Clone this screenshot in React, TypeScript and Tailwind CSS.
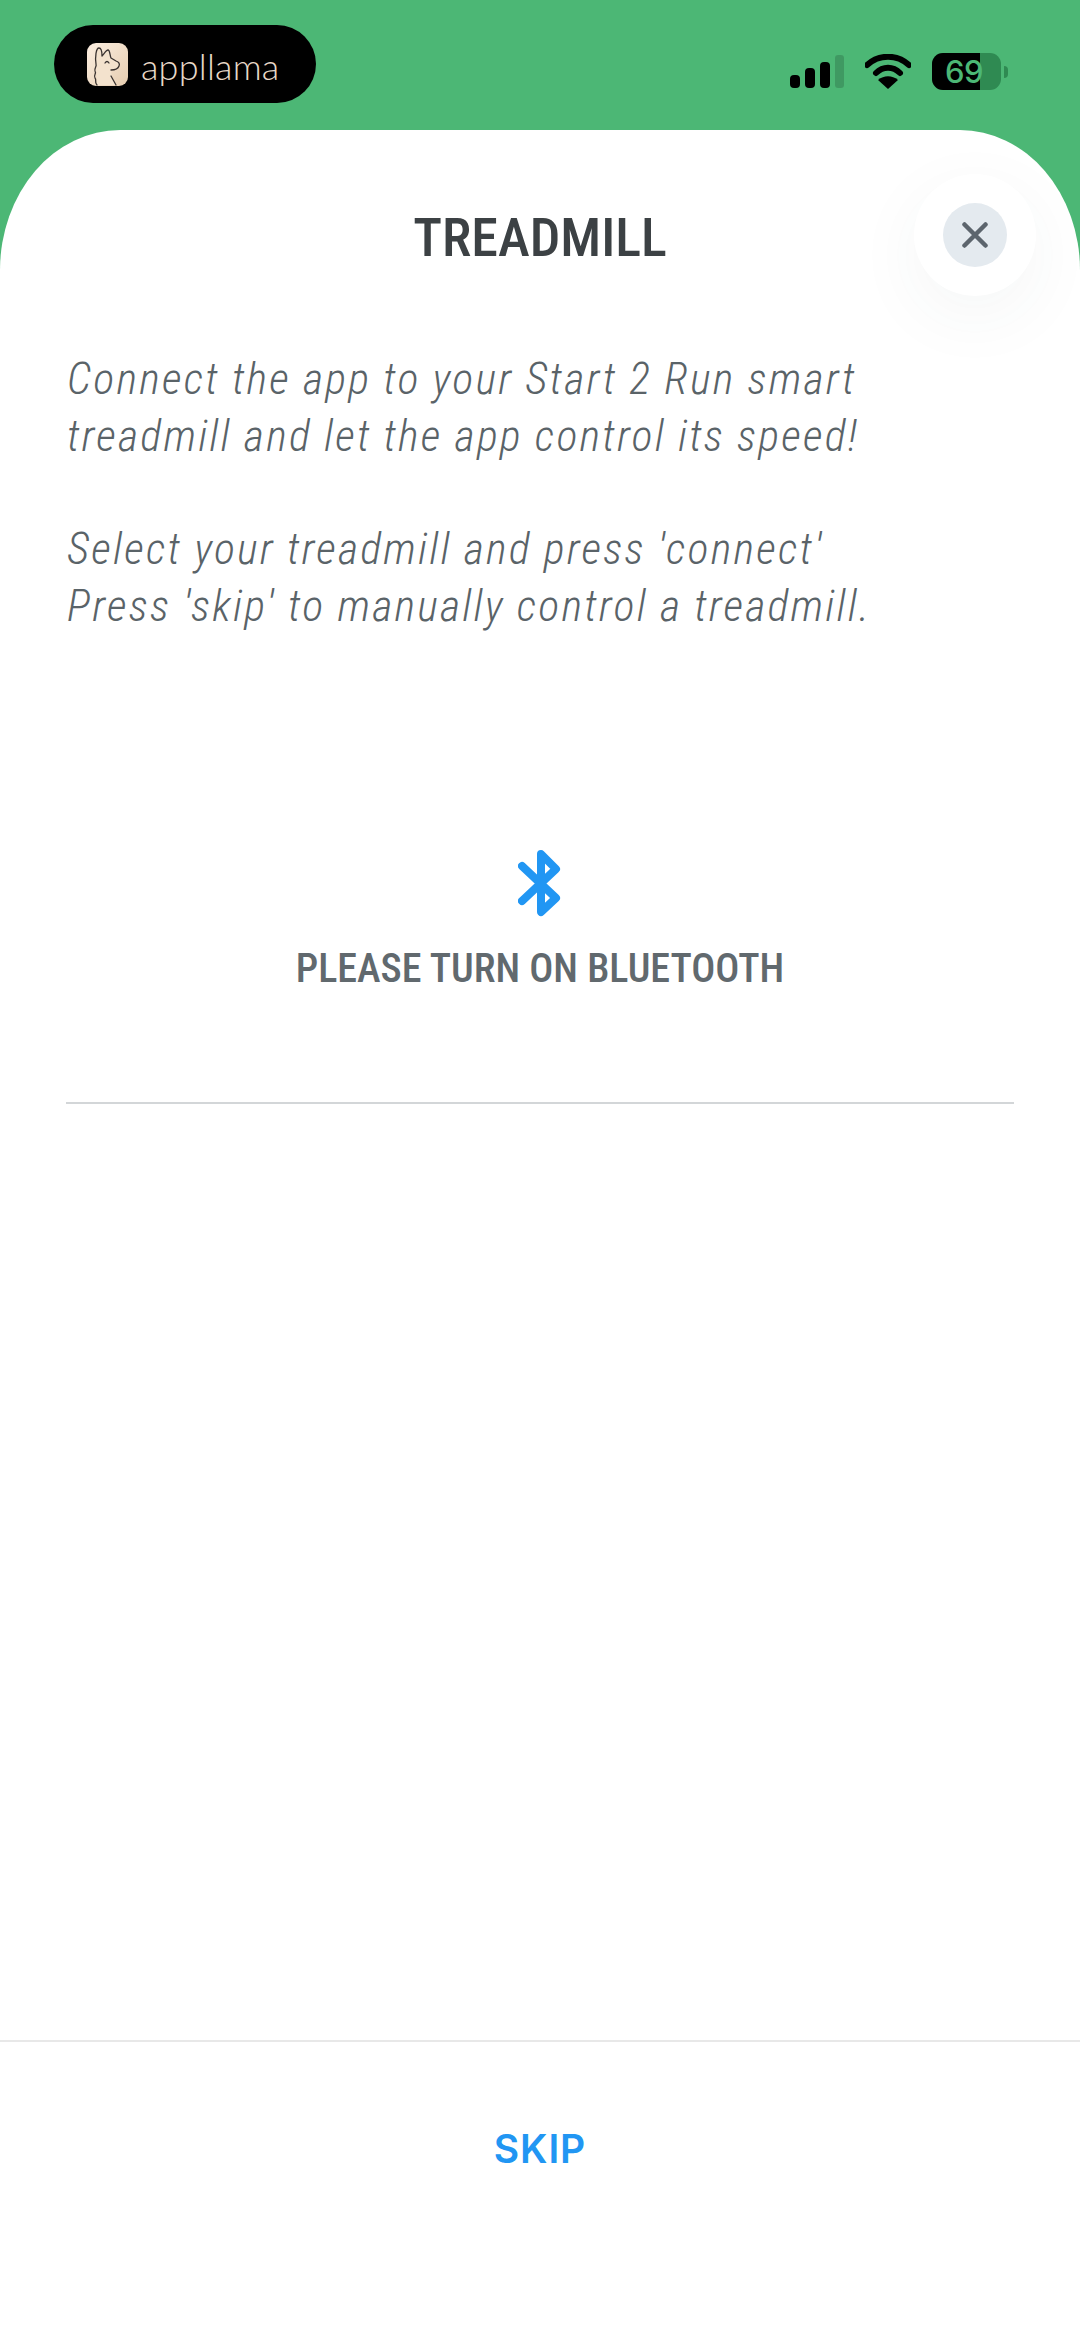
import React from "react";

const barlow = "font-['Roboto',sans-serif]";

function LlamaIcon() {
  return (
    <svg width="41" height="43" viewBox="0 0 41 43" className="shrink-0">
      <defs>
        <linearGradient id="llamaBg" x1="0" y1="0" x2="1" y2="1">
          <stop offset="0" stopColor="#fbeee0" />
          <stop offset="1" stopColor="#e6cdb0" />
        </linearGradient>
      </defs>
      <rect x="0" y="0" width="41" height="43" rx="9" fill="url(#llamaBg)" />
      <path
        d="M10 42 L10 17 C9 10 10 5 12 5 C15 5 15 10 15 13 C17 11 19 7 21 7 C23 7 23 13 24 15 L29 18 C32 19 33 21 32 23 C31 26 27 27 24 27 L25 34 L29 42 Z"
        fill="#f3e2cd"
      />
      <path
        d="M10 42 C7 39 10 37 8 35 C6 32 10 31 8 28 C7 25 10 24 9 21 C8 14 9 5 12 5 C15 5 15 10 15 13 C17 11 19 7 21 7 C23 7 23 13 24 15 L29 18 C32 19 33 21 32 23 C31 26 27 27 24 27 M24 33 L29 42"
        fill="none"
        stroke="#3a3330"
        strokeWidth="1.3"
        strokeLinecap="round"
        strokeLinejoin="round"
      />
      <path d="M18 20 Q20 17 22 20" fill="none" stroke="#3a3330" strokeWidth="1.3" strokeLinecap="round" />
    </svg>
  );
}

function StatusIcons() {
  return (
    <div className="flex items-center">
      <svg width="54" height="34" viewBox="0 0 54 34" className="block">
        <rect x="0" y="20" width="10" height="13" rx="4" fill="#000" />
        <rect x="15" y="13" width="10" height="20" rx="4" fill="#000" />
        <rect x="30" y="7" width="10" height="26" rx="4" fill="#000" />
        <rect x="45" y="0" width="9" height="33" rx="3" fill="#000" fillOpacity="0.16" />
      </svg>
      <svg width="46" height="36" viewBox="0 0 46 36" className="ml-[21px] block">
        <path d="M2 11 C14 0 32 0 44 11" fill="none" stroke="#000" strokeWidth="6" strokeLinecap="round" />
        <path d="M11 19 C18 12 28 12 35 19" fill="none" stroke="#000" strokeWidth="6" strokeLinecap="round" />
        <path d="M13 26 C19 21 27 21 33 26 L23 35 Z" fill="#000" />
      </svg>
      <div className="ml-[21px] flex items-center">
        <div className="relative flex h-[37px] w-[69px] items-center overflow-hidden rounded-[11px] bg-[#2f8a52]">
          <div className="absolute inset-y-0 left-0 w-[48px] bg-black" />
          <span className="relative ml-[13px] font-['Inter',sans-serif] text-[31px] leading-none font-medium tracking-[-0.5px] text-[#4cb775]">
            69
          </span>
        </div>
        <div className="ml-[3px] h-[12px] w-[4px] rounded-r-full bg-[#2f8a52]" />
      </div>
    </div>
  );
}

export default function App() {
  return (
    <div className="flex h-[2337px] w-[1080px] flex-col overflow-hidden bg-[#4cb775]">
      <div className="flex h-[130px] shrink-0 items-start justify-between pt-[25px] pr-[72px] pl-[54px]">
        <div className="flex h-[78px] w-[262px] items-center rounded-full bg-black pl-[33px]">
          <LlamaIcon />
          <span className="mt-[3px] ml-[13px] font-['Lato',sans-serif] text-[36px] leading-none font-light tracking-[0.2px] text-[#e8d9c8]">
            appllama
          </span>
        </div>
        <div className="pt-[28px] pl-[2px]">
          <StatusIcons />
        </div>
      </div>

      <div className="relative flex flex-1 flex-col rounded-t-[120px_140px] bg-white">
        <div className="absolute top-[44px] right-[44px] flex h-[122px] w-[122px] items-center justify-center rounded-full bg-white shadow-[0_20px_70px_rgba(60,70,80,0.05)]">
          <div className="flex h-[64px] w-[64px] items-center justify-center rounded-full bg-[#e4eaef]">
            <svg width="26" height="26" viewBox="0 0 26 26">
              <path d="M2.5 2.5 L23.5 23.5 M23.5 2.5 L2.5 23.5" stroke="#5c656d" strokeWidth="4.5" strokeLinecap="round" />
            </svg>
          </div>
        </div>

        <h1 className={`${barlow} pt-[82px] text-center text-[54px] leading-[52px] font-medium font-stretch-[75%] text-[#3c4144]`}>
          TREADMILL
        </h1>

        <div className={`${barlow} mt-[87px] pl-[67px] text-[44px] leading-[57px] font-light font-stretch-[75%] tracking-[2.2px] text-[#5a6368] italic`}>
          <p>Connect the app to your Start 2 Run smart</p>
          <p>treadmill and let the app control its speed!</p>
          <p className="mt-[56px]">Select your treadmill and press 'connect'</p>
          <p>Press 'skip' to manually control a treadmill.</p>
        </div>

        <div className="mt-[215px] flex flex-col items-center">
          <svg width="44" height="68" viewBox="0 0 44 68">
            <path
              d="M4 16 L38 48 L23 62 L23 4 L38 19 L4 51"
              fill="none"
              stroke="#2196f3"
              strokeWidth="8"
              strokeLinecap="round"
              strokeLinejoin="round"
            />
          </svg>
          <p className={`${barlow} mt-[28px] text-[40px] leading-[46px] font-medium font-stretch-[75%] text-[#61696e]`}>
            PLEASE TURN ON BLUETOOTH
          </p>
        </div>

        <div className="mx-[66px] mt-[110px] h-[2px] bg-[#d3d6d8]" />

        <div className="mt-auto flex h-[297px] shrink-0 justify-center border-t-2 border-[#e8e8e8] pt-[85px]">
          <span className="font-['Inter',sans-serif] text-[39px] leading-[44px] font-semibold tracking-[0.9px] text-[#2196f3]">
            SKIP
          </span>
        </div>
      </div>
    </div>
  );
}
